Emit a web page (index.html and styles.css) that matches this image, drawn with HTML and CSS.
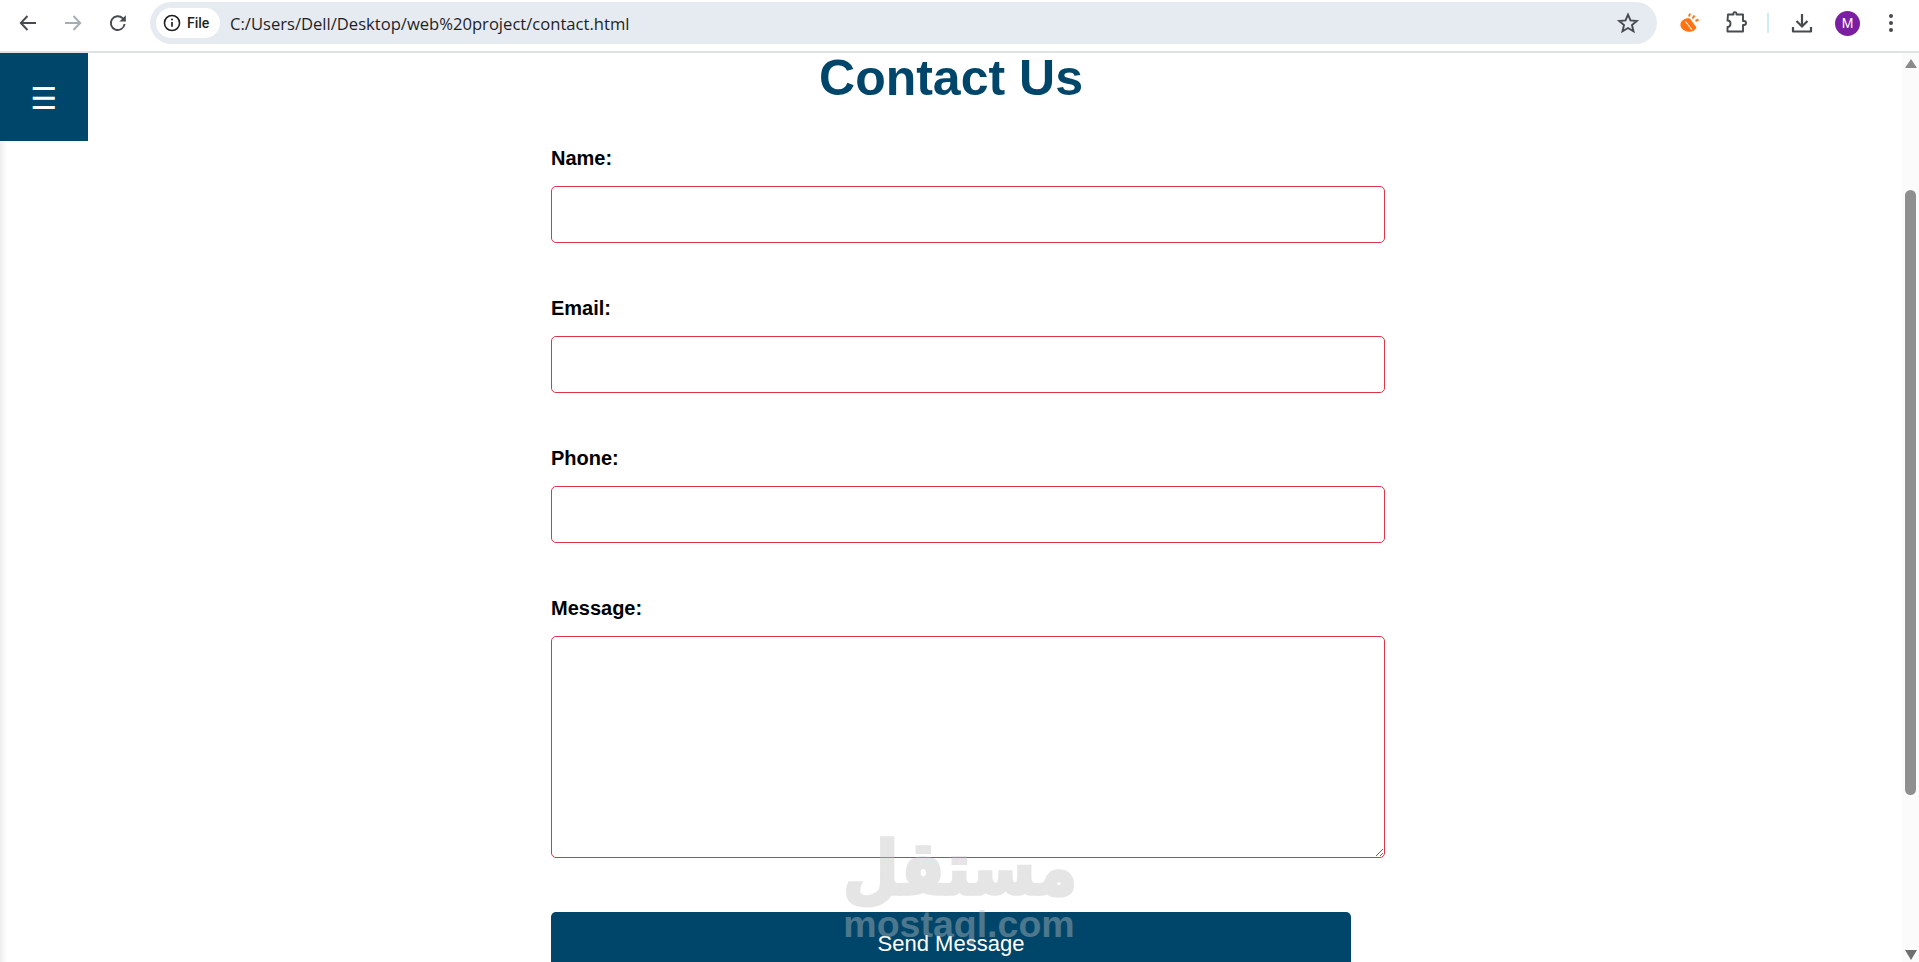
FILE: index.html
```html
<!DOCTYPE html>
<html lang="en">
<head>
    <meta charset="UTF-8">
    <meta name="viewport" content="width=device-width, initial-scale=1.0">
    <title>Contact Us</title>
    <link rel="stylesheet" href="styles.css">
</head>
<body>
    <div class="toolbar">
        <div class="nav-buttons">
            <svg class="icon" viewBox="0 0 24 24"><path d="M20 12H5M11.500 5L4.800 12l6.700 7" fill="none" stroke="#474a4f" stroke-width="1.900"/></svg>
            <svg class="icon" viewBox="0 0 24 24"><path d="M4 12h15M12.500 5l6.700 7-6.700 7" fill="none" stroke="#a3adb3" stroke-width="1.900"/></svg>
            <svg class="icon" viewBox="0 0 24 24"><path d="M18.600 13a6.900 6.900 0 1 1-1.800-5.600L19 9.600" fill="none" stroke="#474a4f" stroke-width="1.900"/><path d="M19.800 4.200v6.400h-6.400z" fill="#474a4f"/></svg>
        </div>
        <div class="address">
            <div class="chip">
                <svg class="chip-icon" viewBox="0 0 16 16"><circle cx="8" cy="8" r="6.700" fill="none" stroke="#1f1f1f" stroke-width="1.400"/><path d="M8 7v4.400" stroke="#1f1f1f" stroke-width="1.500"/><circle cx="8" cy="4.900" r="0.900" fill="#1f1f1f"/></svg>
                <span>File</span>
            </div>
            <span class="url">C:/Users/Dell/Desktop/web%20project/contact.html</span>
            <svg class="star" viewBox="0 0 24 24"><path d="M12 3.600l2.500 5.800 6.300.6-4.800 4.100 1.500 6.200L12 17l-5.500 3.300 1.500-6.200-4.800-4.100 6.300-.6z" fill="none" stroke="#474a4f" stroke-width="1.900"/></svg>
        </div>
        <div class="actions">
            <svg class="ext-orange" viewBox="0 0 24 24"><path d="M12 7.500l6.500 9c-1.500 3.500-5.500 5-9.500 4-4.500-1-7-4.500-6.500-7.500.5-3.500 5-6.500 9.500-5.500z" fill="#ff7410"/><path d="M7.500 10.500l6.500 8.500" stroke="#fff" stroke-width="1.100"/><path d="M12 2.500l-1 3M16.500 4.500l-2 3M20.500 8.500l-3 1.500" stroke="#ff7410" stroke-width="2"/></svg>
            <svg class="ext-puzzle" viewBox="0 0 24 24"><path d="M4 3.500h5.500V2.800a1.500 1.500 0 0 1 3-.3v1h6.500v6.500h1a2 2 0 0 1 0 4h-1v6.500H3.500v-4.500c1.800 0 3-1.500 3-3.500s-1.200-3-3-3z" fill="none" stroke="#474a4f" stroke-width="1.900" stroke-linejoin="round"/></svg>
            <span class="divider"></span>
            <svg class="download" viewBox="0 0 24 24"><path d="M12 3v12M6.500 10l5.500 5.500 5.500-5.500" fill="none" stroke="#474a4f" stroke-width="2.200"/><path d="M3 16v4.500h18V16" fill="none" stroke="#474a4f" stroke-width="2.200" stroke-linejoin="round"/></svg>
            <div class="avatar">M</div>
            <div class="dots"><i></i><i></i><i></i></div>
        </div>
    </div>

    <div class="viewport">
        <div class="page">
            <div class="menu-button">☰</div>

            <div class="container">
                <h1>Contact Us</h1>
                <form class="contact-form">
                    <label>Name:</label>
                    <input type="text">
                    <label>Email:</label>
                    <input type="text">
                    <label>Phone:</label>
                    <input type="text">
                    <label>Message:</label>
                    <textarea></textarea>
                    <button type="button">Send Message</button>
                </form>
            </div>

            <div class="watermark">
                <div class="wm-arabic">مستقل</div>
                <div class="wm-latin">mostaql.com</div>
            </div>
        </div>
        <div class="scrollbar">
            <span class="arrow-up"></span>
            <div class="track"><div class="thumb"></div></div>
            <span class="arrow-down"></span>
        </div>
    </div>
</body>
</html>
```

FILE: styles.css
```css
html, body {
    height: 100%;
}
body {
    font-family: "Liberation Sans", Arial, sans-serif;
    margin: 0;
    padding: 0;
    display: flex;
    flex-direction: column;
    height: 100vh;
    overflow: hidden;
    background: white;
}

/* browser bar */
.toolbar {
    height: 53px;
    flex-shrink: 0;
    box-sizing: border-box;
    display: flex;
    align-items: center;
    padding-bottom: 5px;
    border-bottom: 2px solid #e0e1e3;
    background: white;
}
.nav-buttons {
    display: flex;
    align-items: center;
    gap: 21px;
    padding-left: 16px;
    width: 150px;
    box-sizing: border-box;
}
.icon {
    width: 24px;
    height: 24px;
}
.address {
    width: 1507px;
    height: 42px;
    border-radius: 21px;
    background: #e6ebf2;
    display: flex;
    align-items: center;
    padding-left: 6px;
    box-sizing: border-box;
}
.chip {
    width: 64px;
    height: 30px;
    border-radius: 15px;
    background: white;
    display: flex;
    align-items: center;
    gap: 6px;
    padding-left: 7px;
    box-sizing: border-box;
    font-family: Roboto, sans-serif;
    font-size: 14px;
    font-weight: 500;
    color: #1f1f1f;
}
.chip-icon {
    width: 18px;
    height: 18px;
}
.url {
    margin-left: 10px;
    font-family: "Open Sans", sans-serif;
    font-size: 16.600px;
    color: #1f1f1f;
    flex: 1;
}
.star {
    width: 24px;
    height: 24px;
    margin-right: 17px;
}
.actions {
    flex: 1;
    display: flex;
    align-items: center;
    padding-left: 21px;
}
.ext-orange {
    width: 24px;
    height: 24px;
}
.ext-puzzle {
    width: 24px;
    height: 24px;
    margin-left: 22px;
}
.divider {
    width: 2px;
    height: 20px;
    background: #cfeaf3;
    margin-left: 19px;
}
.download {
    width: 24px;
    height: 24px;
    margin-left: 21px;
}
.avatar {
    width: 25px;
    height: 25px;
    border-radius: 50%;
    background: #7b1fa2;
    color: white;
    font-size: 14px;
    line-height: 25px;
    text-align: center;
    margin-left: 21px;
}
.dots {
    display: flex;
    flex-direction: column;
    gap: 3px;
    margin-left: 29px;
}
.dots i {
    display: block;
    width: 4px;
    height: 4px;
    border-radius: 50%;
    background: #474a4f;
}

/* page */
.viewport {
    flex: 1;
    display: flex;
    min-height: 0;
}
.page {
    flex: 1;
    position: relative;
    overflow: hidden;
    background: linear-gradient(to right, #eeeeee, white 7px);
}
.menu-button {
    position: absolute;
    top: 0;
    left: 0;
    width: 88px;
    height: 88px;
    background: #00466a;
    color: white;
    font-family: "DejaVu Sans", sans-serif;
    font-size: 30px;
    line-height: 92px;
    text-align: center;
}
.container {
    width: 800px;
    margin: 0 auto;
}
h1 {
    margin: 0;
    font-size: 50px;
    line-height: 50px;
    text-align: center;
    color: #00466a;
}
.contact-form {
    padding-top: 44px;
}
label {
    display: block;
    font-size: 20px;
    font-weight: bold;
    line-height: 23px;
    margin-bottom: 16px;
    color: black;
}
input, textarea {
    display: block;
    width: 100%;
    padding: 16px;
    border: 1px solid #dc3545;
    border-radius: 5px;
    background: white;
    margin-bottom: 54px;
}
input {
    height: 23px;
}
textarea {
    height: 188px;
    margin-bottom: 54px;
}
button {
    display: block;
    width: 100%;
    height: 64px;
    border: 0;
    border-radius: 5px;
    background: #00466a;
    color: white;
    font-family: "Liberation Sans", Arial, sans-serif;
    font-size: 22px;
    padding: 0;
}
.watermark {
    position: absolute;
    top: 780px;
    left: 843px;
    width: 232px;
    text-align: center;
    color: #c0c0c0;
    opacity: 0.4;
    pointer-events: none;
}
.wm-arabic {
    font-family: "DejaVu Sans", sans-serif;
    font-weight: bold;
    font-size: 64px;
    line-height: 72px;
    -webkit-text-stroke: 3px #c0c0c0;
    transform: scaleY(1.15);
}
.wm-latin {
    font-family: "Liberation Sans", Arial, sans-serif;
    font-weight: bold;
    font-size: 37.500px;
    line-height: 38px;
}

/* scrollbar */
.scrollbar {
    width: 17px;
    flex-shrink: 0;
    background: #fbfbfb;
    display: flex;
    flex-direction: column;
    align-items: center;
    padding: 6px 0 2px;
    box-sizing: border-box;
}
.arrow-up {
    width: 0;
    height: 0;
    border-left: 6.500px solid transparent;
    border-right: 6.500px solid transparent;
    border-bottom: 9px solid #8a8a8a;
}
.arrow-down {
    width: 0;
    height: 0;
    border-left: 6.500px solid transparent;
    border-right: 6.500px solid transparent;
    border-top: 10px solid #6f6f6f;
}
.track {
    flex: 1;
    width: 100%;
    padding-top: 122px;
}
.thumb {
    width: 11px;
    height: 605px;
    margin: 0 auto;
    border-radius: 6px;
    background: #8f8f8f;
}
```
